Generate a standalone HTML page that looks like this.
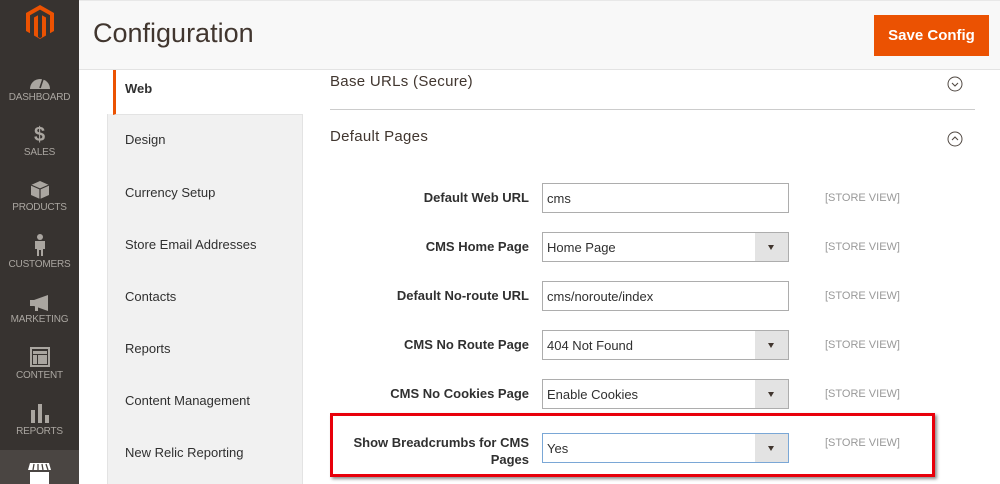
<!DOCTYPE html>
<html><head><meta charset="utf-8"><style>
*{margin:0;padding:0;box-sizing:border-box}
body{width:1000px;height:484px;overflow:hidden;background:#fff;font-family:"Liberation Sans",sans-serif;position:relative;color:#303030}
.sb{position:absolute;left:0;top:0;width:79px;height:484px;background:#373330}
.mi{position:absolute;left:0;width:79px;text-align:center;color:#aaa6a0;font-size:10px;letter-spacing:-.2px}
.mi svg{display:block;margin:0 auto 3px}
.hd{position:absolute;left:79px;top:0;right:0;height:70px;background:#f8f8f8;border-bottom:1px solid #e3e3e3;border-top:1px solid #e8e8e8}
.hd h1{position:absolute;left:14px;top:17px;font-weight:normal;font-size:27px;color:#41362f}
.btn{position:absolute;left:795px;top:14px;width:115px;height:41px;background:#eb5202;color:#fff;font-weight:bold;font-size:15px;text-align:center;line-height:41px}
.nav{position:absolute;left:107px;top:114px;width:196px;height:370px;background:#f1f1f1;border-right:1px solid #e3e3e3;border-left:1px solid #e3e3e3}
.web{position:absolute;left:113px;top:70px;width:190px;height:45px;background:#fff;border-left:3px solid #eb5202;border-bottom:1px solid #e3e3e3;font-size:13px;font-weight:bold;color:#303030;padding:11px 0 0 9px}
.ni{position:absolute;left:125px;font-size:13px;color:#303030}
.sec{position:absolute;left:330px;font-size:15px;color:#41362f;letter-spacing:.3px}
.circ{position:absolute;left:947px}
.lbl{position:absolute;right:471px;font-size:13px;font-weight:bold;color:#303030;text-align:right;line-height:17px}
.inp{position:absolute;left:542px;width:247px;height:30px;border:1px solid #adadad;background:#fff;font-size:13px;padding:7px 0 0 4px;color:#303030}
.inp .ar{position:absolute;right:0;top:0;width:33px;height:28px;background:#e3e3e3;}
.inp .ar:after{content:"";position:absolute;left:13px;top:12px;border-left:3px solid transparent;border-right:3px solid transparent;border-top:5px solid #41362f}
.sv{position:absolute;left:825px;font-size:11px;color:#999}
.red{position:absolute;left:330px;top:413px;width:605px;height:64px;border:3px solid #e8000b;box-shadow:2px 2px 3px rgba(0,0,0,.45)}
</style></head><body>
<div class="sb">
 <svg style="position:absolute;left:26px;top:5px" width="28" height="34" viewBox="0 0 28 34"><path d="M14 0 L28 8 V26 L24 28.3 V10.3 L14 4.6 L4 10.3 V28.3 L0 26 V8 Z" fill="#eb5202"/><path d="M8 12.5 L12 10.2 V32 L14 33.2 L16 32 V10.2 L20 12.5 V30.5 L14 34 L8 30.5 Z" fill="#eb5202"/></svg>
 <div class="mi" style="top:74px"><svg width="20" height="15" viewBox="0 0 20 15"><path d="M0 15 A10 10 0 0 1 20 15 Z" fill="#aaa6a0"/><path d="M10 14 L13 5" stroke="#373330" stroke-width="1.6"/></svg>DASHBOARD</div>
 <div class="mi" style="top:124px"><div style="font-size:20px;font-weight:bold;line-height:22px;margin-bottom:1px">$</div>SALES</div>
 <div class="mi" style="top:181px"><svg width="18" height="18" viewBox="0 0 18 18"><path d="M9 0 L18 4 V14 L9 18 L0 14 V4 Z" fill="#aaa6a0"/><path d="M0 4 L9 8 L18 4 M9 8 V18" stroke="#373330" stroke-width="1.2" fill="none"/></svg>PRODUCTS</div>
 <div class="mi" style="top:234px"><svg width="12" height="22" viewBox="0 0 12 22"><circle cx="6" cy="3" r="3" fill="#aaa6a0"/><path d="M1 7 H11 V15 H9 V22 H7 V16 H5 V22 H3 V15 H1 Z" fill="#aaa6a0"/></svg>CUSTOMERS</div>
 <div class="mi" style="top:295px"><svg width="20" height="16" viewBox="0 0 20 16"><path d="M0 5 H4 L18 0 V16 L4 11 H0 Z" fill="#aaa6a0"/><rect x="5" y="11" width="3" height="5" fill="#aaa6a0"/></svg>MARKETING</div>
 <div class="mi" style="top:347px"><svg width="20" height="20" viewBox="0 0 20 20"><rect x="1" y="1" width="18" height="18" fill="none" stroke="#aaa6a0" stroke-width="2"/><rect x="3" y="4" width="14" height="3" fill="#aaa6a0"/><rect x="3" y="8" width="4" height="9" fill="#aaa6a0"/><rect x="8" y="8" width="9" height="9" fill="#aaa6a0"/></svg>CONTENT</div>
 <div class="mi" style="top:404px"><svg width="18" height="19" viewBox="0 0 18 19"><rect x="0" y="6" width="4" height="13" fill="#aaa6a0"/><rect x="7" y="0" width="4" height="19" fill="#aaa6a0"/><rect x="14" y="11" width="4" height="8" fill="#aaa6a0"/></svg>REPORTS</div>
 <div style="position:absolute;left:0;top:450px;width:79px;height:34px;background:#4a4542"><svg style="position:absolute;left:28px;top:13px" width="23" height="21" viewBox="0 0 23 21"><path d="M2 0 H21 L23 7 H0 Z" fill="#fff"/><path d="M6 1 L5 7 M10 1 L10 7 M14 1 L15 7 M18 1 L20 7" stroke="#4a4542" stroke-width="1.3"/><rect x="2" y="9" width="19" height="12" fill="#fff"/></svg></div>
</div>
<div class="hd"><h1>Configuration</h1><div class="btn">Save Config</div></div>
<div class="nav"></div>
<div class="web">Web</div>
<div class="ni" style="top:132px">Design</div>
<div class="ni" style="top:185px">Currency Setup</div>
<div class="ni" style="top:237px">Store Email Addresses</div>
<div class="ni" style="top:289px">Contacts</div>
<div class="ni" style="top:341px">Reports</div>
<div class="ni" style="top:393px">Content Management</div>
<div class="ni" style="top:445px">New Relic Reporting</div>
<div class="sec" style="top:73px">Base URLs (Secure)</div>
<svg class="circ" style="top:76px" width="16" height="16" viewBox="0 0 16 16"><circle cx="8" cy="8" r="7" fill="none" stroke="#514943" stroke-width="1"/><path d="M5 7 L8 10 L11 7" fill="none" stroke="#514943" stroke-width="1.1"/></svg>
<div style="position:absolute;left:330px;top:109px;width:645px;height:1px;background:#ccc"></div>
<div class="sec" style="top:128px">Default Pages</div>
<svg class="circ" style="top:131px" width="16" height="16" viewBox="0 0 16 16"><circle cx="8" cy="8" r="7" fill="none" stroke="#514943" stroke-width="1"/><path d="M5 9 L8 6 L11 9" fill="none" stroke="#514943" stroke-width="1.1"/></svg>
<div class="lbl" style="top:189px">Default Web URL</div>
<div class="inp" style="top:183px">cms</div><div class="sv" style="top:192px">[STORE VIEW]</div>
<div class="lbl" style="top:238px">CMS Home Page</div>
<div class="inp" style="top:232px">Home Page<div class="ar"></div></div><div class="sv" style="top:241px">[STORE VIEW]</div>
<div class="lbl" style="top:287px">Default No-route URL</div>
<div class="inp" style="top:281px">cms/noroute/index</div><div class="sv" style="top:290px">[STORE VIEW]</div>
<div class="lbl" style="top:336px">CMS No Route Page</div>
<div class="inp" style="top:330px">404 Not Found<div class="ar"></div></div><div class="sv" style="top:339px">[STORE VIEW]</div>
<div class="lbl" style="top:385px">CMS No Cookies Page</div>
<div class="inp" style="top:379px">Enable Cookies<div class="ar"></div></div><div class="sv" style="top:388px">[STORE VIEW]</div>
<div class="lbl" style="top:434px">Show Breadcrumbs for CMS<br>Pages</div>
<div class="inp" style="top:433px;border-color:#7aa7d6">Yes<div class="ar"></div></div><div class="sv" style="top:437px">[STORE VIEW]</div>
<div class="red"></div>
</body></html>
